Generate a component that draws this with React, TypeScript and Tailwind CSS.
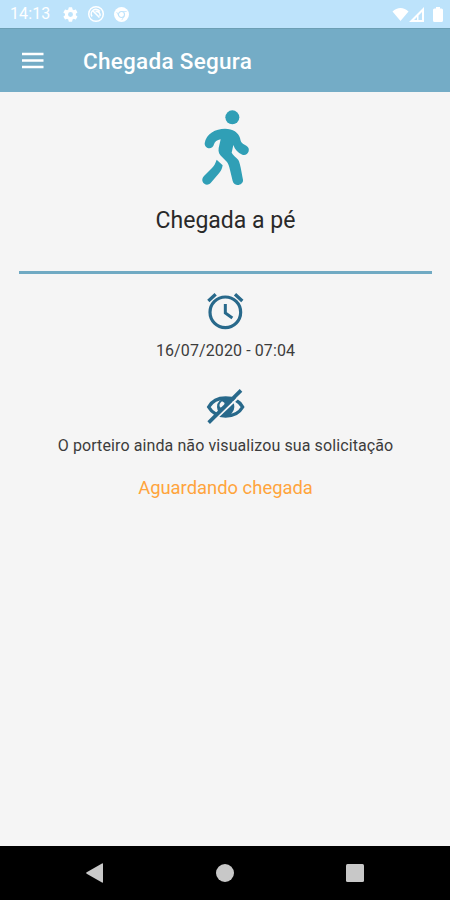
import React from "react";

function StatusBar() {
  return (
    <div className="flex h-7 items-center bg-[#bde3fb] pr-[7px] pl-[10px] text-white">
      <span className="w-[41px] text-[16px] leading-7 tracking-[0.1px]">14:13</span>
      <svg className="ml-[12px]" width="15" height="15" viewBox="2 2 20 20" fill="currentColor">
        <path fillRule="evenodd" d="M19.1 12.9a7 7 0 0 0 0-1.8l2-1.6c.2-.1.3-.4.1-.6l-1.9-3.3c-.1-.2-.4-.3-.6-.2l-2.4 1a7 7 0 0 0-1.6-1l-.4-2.5a.5.5 0 0 0-.5-.4h-3.8a.5.5 0 0 0-.5.4l-.4 2.5a7 7 0 0 0-1.6 1l-2.4-1c-.2-.1-.5 0-.6.2L2.6 8.9c-.1.2-.1.5.1.6l2 1.6a7 7 0 0 0 0 1.8l-2 1.6c-.2.1-.2.4-.1.6l1.9 3.3c.1.2.4.3.6.2l2.4-1a7 7 0 0 0 1.6 1l.4 2.5c0 .2.2.4.5.4h3.8c.3 0 .5-.2.5-.4l.4-2.5a7 7 0 0 0 1.6-1l2.4 1c.2.1.5 0 .6-.2l1.9-3.3c.1-.2.1-.5-.1-.6zM12 15.3a3.3 3.3 0 1 1 0-6.6 3.3 3.3 0 0 1 0 6.6z" />
      </svg>
      <svg className="ml-[9px]" width="18" height="18" viewBox="0 0 18 18" fill="none" stroke="currentColor">
        <circle cx="9" cy="9" r="7.3" strokeWidth="1.5" />
        <path d="M5 11.5a4.6 4.6 0 0 1 7.8-5M6 6l6.500 6.500M8.500 6.500a3.700 3.700 0 0 1 4.500 4.500" strokeWidth="1.6" />
      </svg>
      <svg className="ml-[9px]" width="15" height="15" viewBox="0 0 16 16">
        <circle cx="8" cy="8" r="8" fill="currentColor" />
        <circle cx="8" cy="8" r="3.200" fill="none" stroke="#bde3fb" strokeWidth="1.200" />
        <path d="M8 4.800h5.500M5.200 9.600 2.800 5.400M10.800 9.600 8.300 14" fill="none" stroke="#bde3fb" strokeWidth="0.800" />
      </svg>
      <svg className="ml-auto" width="17" height="14" viewBox="0 0 17 14" fill="currentColor">
        <path d="M.5 4.500C5-.2 12-.2 16.500 4.500L8.500 14z" />
      </svg>
      <svg className="mr-px" width="16" height="15" viewBox="0 0 16 15">
        <path fillRule="evenodd" fill="currentColor" d="M15 0v15H0zM13 5v8H9.500V8.500zM8 10v3H5z" />
      </svg>
      <svg className="ml-[7px]" width="10" height="15" viewBox="0 0 10 15" fill="currentColor">
        <path d="M3 0h4v1.500h1.500q1.500 0 1.500 1.500v10.500q0 1.500-1.500 1.500h-7Q0 15 0 13.500V3q0-1.500 1.500-1.500H3z" />
      </svg>
    </div>
  );
}

function Header() {
  return (
    <header className="flex h-16 items-center border-t border-[#6c9fb4] bg-[#74acc6] pl-[22px] text-white">
      <svg className="mr-[39px]" width="22" height="18" viewBox="0 0 22 18" stroke="currentColor" strokeWidth="2.400">
        <path d="M0 2h21.500M0 8.500h21.500M0 15h21.500" />
      </svg>
      <h1 className="text-[22.500px] leading-8 font-medium tracking-[0.28px] whitespace-nowrap">Chegada Segura</h1>
    </header>
  );
}

function WalkingIcon() {
  return (
    <svg className="mt-[8px] -ml-px" width="70" height="95" viewBox="0 0 210 285" fill="#309fb6">
      <circle cx="127" cy="52" r="21" />
      <path d="M105 86C77 86 48 101 44 130C44 148 68 151 72 133C74 125 81 120 92 118L86 144C84 156 88 164 97 172L111 186C116 192 118 201 120 210L128 243C132 261 161 257 159 239C154 214 151 191 145 180C140 173 128 165 125 158L130 135C135 149 143 158 157 164C173 170 185 146 169 137C154 130 153 127 150 114C145 97 129 86 105 86Z" />
      <path d="M80 179L98 196C96 207 93 213 87 220L62 249C48 263 27 244 42 228L66 204C73 196 76 191 80 179Z" />
    </svg>
  );
}

function AlarmIcon() {
  return (
    <svg width="60" height="50" viewBox="0 0 180 150" fill="none" stroke="#28698b">
      <circle cx="91" cy="82" r="46" strokeWidth="9.500" />
      <path d="M91 57V84L112 99" strokeWidth="9" />
      <path d="M40 48L62 28M120 28L142 48" strokeWidth="10" />
    </svg>
  );
}

function HiddenEyeIcon() {
  return (
    <svg width="60" height="50" viewBox="0 0 180 150" fill="none" stroke="#28698b">
      <path d="M41 81C61 45 123 45 143 81C123 117 61 117 41 81Z" strokeWidth="10" />
      <path d="M92 55a26 26 0 1 0 0 52a26 26 0 0 0 0-52Z" fill="#28698b" stroke="none" />
      <path d="M81 64C73 69 72 77 75 82C86 85 91 78 88 68Z" fill="#f5f5f5" stroke="none" />
      <path d="M47 131L145 38" stroke="#f5f5f5" strokeWidth="6" />
      <path d="M41 128L138 31" strokeWidth="11" />
    </svg>
  );
}

function NavigationBar() {
  return (
    <nav className="flex h-[54px] items-center justify-between bg-black px-[86px] text-[#c8c8c8]">
      <svg width="17" height="20" viewBox="0 0 17 20" fill="currentColor">
        <path d="M16 .5Q17 0 17 1v18q0 1-1 .5L.7 10.700q-1-.7 0-1.400z" />
      </svg>
      <span className="size-[18px] rounded-full bg-[#c8c8c8]" />
      <span className="size-[18px] rounded-[1.500px] bg-[#c8c8c8]" />
    </nav>
  );
}

export default function App() {
  return (
    <div className="flex h-[900px] w-[450px] flex-col overflow-hidden bg-[#f5f5f5] font-[Roboto,sans-serif]">
      <StatusBar />
      <Header />
      <main className="flex flex-1 flex-col items-center pl-px text-[#3c3c3c]">
        <WalkingIcon />
        <h2 className="mt-[10px] text-[23px] leading-8 text-[#292929]">Chegada a pé</h2>
        <div className="mt-[34px] h-[3px] w-[413px] bg-[#70aac3]" />
        <div className="mt-[11px] mr-[2px]"><AlarmIcon /></div>
        <p className="mt-[6px] text-[16px] leading-5 tracking-[0.1px]">16/07/2020 - 07:04</p>
        <div className="mt-[19px] mr-[2px]"><HiddenEyeIcon /></div>
        <p className="mt-[6px] text-[16px] leading-5 tracking-[0.1px]">O porteiro ainda não visualizou sua solicitação</p>
        <p className="mt-[20px] text-[18.400px] leading-6 text-[#ffa43c]">Aguardando chegada</p>
      </main>
      <NavigationBar />
    </div>
  );
}
